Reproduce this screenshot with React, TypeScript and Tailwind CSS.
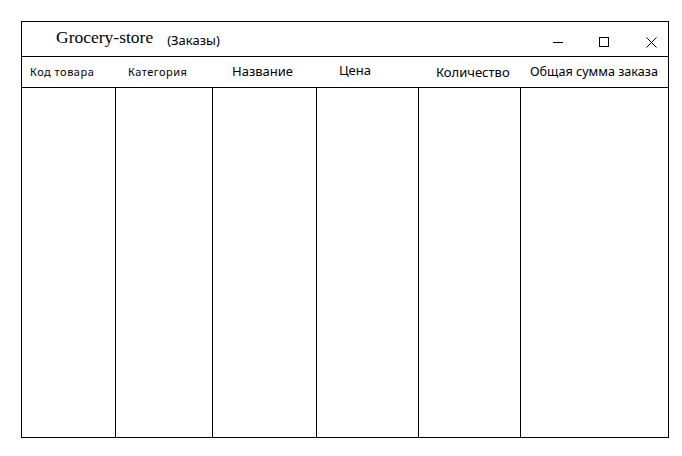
import React from 'react';

const columns = [
  { label: 'Код товара', width: 'w-[94px]', text: 'text-[11px] tracking-[0.5px] pl-[8px] pb-[2px]' },
  { label: 'Категория', width: 'w-[97px]', text: 'text-[11px] tracking-[0.5px] pl-[12px] pb-[2px]' },
  { label: 'Название', width: 'w-[104px]', text: 'text-[13px] pl-[19px] pb-[2px]' },
  { label: 'Цена', width: 'w-[102px]', text: 'text-[13px] pl-[22px] pb-[3px]' },
  { label: 'Количество', width: 'w-[102px]', text: 'text-[13px] pl-[17px]' },
  { label: 'Общая сумма заказа', width: 'flex-1', text: 'text-[12.6px] pl-[9px] pt-[1px]' },
];

export default function App() {
  return (
    <div className="w-[682px] h-[456px] bg-white pt-[21px] pl-[21px]">
      <div className="w-[648px] h-[417px] border border-black flex flex-col text-black font-['Noto_Sans','Open_Sans',sans-serif]">
        {/* Title bar */}
        <div className="h-[35px] shrink-0 border-b border-black flex items-center pl-[34px]">
          <span className="font-['Liberation_Serif',serif] text-[17.5px] leading-none pb-[2px]">
            Grocery-store
          </span>
          <span className="ml-[14px] text-[13px] leading-none pt-[3px]">(Заказы)</span>
          <div className="ml-auto flex items-center pr-[11px] pt-[6px]">
            <svg width="11" height="11" viewBox="0 0 11 11" className="mr-[35px]">
              <line x1="0" y1="5.5" x2="10" y2="5.5" stroke="#000" strokeWidth="1" />
            </svg>
            <svg width="11" height="11" viewBox="0 0 11 11" className="mr-[36px]">
              <rect x="0.5" y="0.5" width="9" height="9" fill="none" stroke="#000" strokeWidth="1" />
            </svg>
            <svg width="11" height="11" viewBox="0 0 11 11">
              <path d="M0.5 0.5 L10.5 10.5 M10.5 0.5 L0.5 10.5" stroke="#000" strokeWidth="1" fill="none" />
            </svg>
          </div>
        </div>

        {/* Header row */}
        <div className="h-[31px] shrink-0 border-b border-black flex">
          {columns.map((c) => (
            <div key={c.label} className={`${c.width} flex items-center whitespace-nowrap leading-none ${c.text}`}>
              {c.label}
            </div>
          ))}
        </div>

        {/* Body */}
        <div className="flex-1 flex">
          {columns.map((c, i) => (
            <div
              key={c.label}
              className={`${c.width} ${i < columns.length - 1 ? 'border-r border-black' : ''}`}
            />
          ))}
        </div>
      </div>
    </div>
  );
}
